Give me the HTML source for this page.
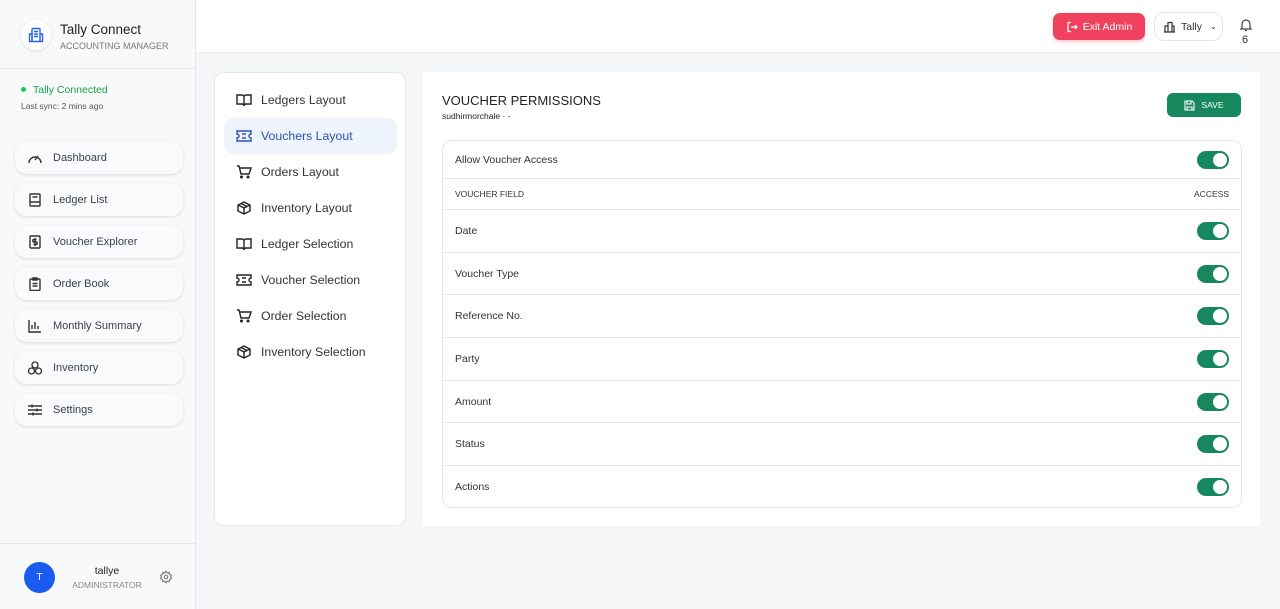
<!DOCTYPE html>
<html><head><meta charset="utf-8"><style>
*{box-sizing:border-box;margin:0;padding:0}
body{width:1280px;height:609px;overflow:hidden;font-family:"Liberation Sans",sans-serif;background:#f5f6f8;position:relative;color:#333}
.sb{position:absolute;left:0;top:0;width:196px;height:609px;background:#f8f9fb;border-right:1px solid #e5e7eb}
.abs{position:absolute}
.nav{position:absolute;left:15px;width:168px;height:33px;border-radius:12px;background:#f9fafb;box-shadow:0 1px 3px rgba(0,0,0,.12);font-size:11px;color:#374151;display:flex;align-items:center;padding-left:12px}
.nav svg{margin-right:10px}
.hdr{position:absolute;left:196px;top:0;right:0;height:53px;background:#fff;border-bottom:1px solid #eceef1}
.lc{position:absolute;left:214px;top:72px;width:192px;height:454px;background:#fff;border:1px solid #e5e7eb;border-radius:10px}
.li{position:absolute;left:9px;width:173px;height:36px;border-radius:10px;display:flex;align-items:center;padding-left:12px;font-size:12.3px;color:#333}
.li svg{margin-right:9px}
.rc{position:absolute;left:423px;top:72px;width:837px;height:454px;background:#fff}
.tb{position:absolute;left:19px;top:68px;width:800px;height:368px;border:1px solid #e5e7eb;border-radius:10px}
.row{position:absolute;left:0;right:0;border-top:1px solid #e5e7eb;font-size:10.5px;color:#333;padding-left:12px;display:flex;align-items:center}
.tg{position:absolute;right:12px;width:32px;height:18px;border-radius:9px;background:#17875d}
.tg:after{content:"";position:absolute;right:2px;top:2px;width:14px;height:14px;border-radius:50%;background:#fff}
</style></head><body>
<div class="sb">
 <div class="abs" style="left:0;top:68px;width:195px;border-top:1px solid #e5e7eb"></div>
 <div class="abs" style="left:21px;top:20px;width:30px;height:30px;border-radius:50%;background:#fff;box-shadow:0 1px 3px rgba(0,0,0,.1)"></div>
 <svg class="abs" style="left:28px;top:27px" width="16" height="16" viewBox="0 0 16 16" fill="none" stroke="#2563eb" stroke-width="1.4"><rect x="4" y="1.5" width="8" height="13" rx="1"/><path d="M1.5 7h2.5v7.5h-2.5zM12 7h2.5v7.5H12M6 4.5h4M6 7h4M6 9.5h4"/></svg>
 <div class="abs" style="left:60px;top:22px;font-size:13.5px;color:#222">Tally Connect</div>
 <div class="abs" style="left:60px;top:41px;font-size:9px;color:#777">ACCOUNTING MANAGER</div>
 <div class="abs" style="left:21px;top:87px;width:5px;height:5px;border-radius:50%;background:#22c55e"></div>
 <div class="abs" style="left:33px;top:84px;font-size:10.5px;color:#16a34a">Tally Connected</div>
 <div class="abs" style="left:21px;top:101px;font-size:8.5px;color:#555">Last sync: 2 mins ago</div>
 <div class="nav" style="top:141px"><svg width="16" height="14" viewBox="0 0 16 14" fill="none" stroke="#333" stroke-width="1.4"><path d="M2 12a6 6 0 0 1 12 0M8 9l3-4"/></svg>Dashboard</div>
 <div class="nav" style="top:183px"><svg width="16" height="14" viewBox="0 0 16 14" fill="none" stroke="#333" stroke-width="1.4"><rect x="3" y="1" width="10" height="12" rx="1"/><path d="M5.5 4h5M3 9h10"/></svg>Ledger List</div>
 <div class="nav" style="top:225px"><svg width="16" height="14" viewBox="0 0 16 14" fill="none" stroke="#333" stroke-width="1.4"><rect x="3" y="1" width="10" height="12" rx="1"/><path d="M9.5 4.5h-2.5a1 1 0 0 0 0 2.5h2a1 1 0 0 1 0 2.5h-2.5M8 3v8"/></svg>Voucher Explorer</div>
 <div class="nav" style="top:267px"><svg width="16" height="14" viewBox="0 0 16 14" fill="none" stroke="#333" stroke-width="1.4"><rect x="3" y="2" width="10" height="11.5" rx="1"/><path d="M6 1h4v2H6zM5.5 6.5h5M5.5 9h5"/></svg>Order Book</div>
 <div class="nav" style="top:309px"><svg width="16" height="14" viewBox="0 0 16 14" fill="none" stroke="#333" stroke-width="1.4"><path d="M2 1v12h12M5 10V6M8 10V3M11 10V7"/></svg>Monthly Summary</div>
 <div class="nav" style="top:351px"><svg width="16" height="14" viewBox="0 0 16 14" fill="none" stroke="#333" stroke-width="1.3"><circle cx="8" cy="4" r="3"/><circle cx="4.5" cy="10" r="3"/><circle cx="11.5" cy="10" r="3"/></svg>Inventory</div>
 <div class="nav" style="top:393px"><svg width="16" height="14" viewBox="0 0 16 14" fill="none" stroke="#333" stroke-width="1.4"><path d="M1 3h14M1 7h14M1 11h14"/><path d="M5 1.5v3M10 5.5v3M6 9.5v3"/></svg>Settings</div>
 <div class="abs" style="left:0;top:543px;width:195px;border-top:1px solid #e5e7eb"></div>
 <div class="abs" style="left:24px;top:562px;width:31px;height:31px;border-radius:50%;background:#1a5cf0;color:#fff;font-size:10px;display:flex;align-items:center;justify-content:center">T</div>
 <div class="abs" style="left:72px;top:565px;width:70px;text-align:center;font-size:10.5px;color:#222">tallye</div>
 <div class="abs" style="left:72px;top:580px;width:70px;text-align:center;font-size:8.5px;color:#888">ADMINISTRATOR</div>
 <svg class="abs" style="left:159px;top:570px" width="14" height="14" viewBox="0 0 24 24" fill="none" stroke="#777" stroke-width="1.8"><circle cx="12" cy="12" r="3"/><path d="M12 2l2 3 3.5-1 .5 3.5 3.5 1.5-1.5 3 1.5 3-3.5 1.5-.5 3.5-3.5-1-2 3-2-3-3.5 1-.5-3.5L2.5 15 4 12 2.5 9 6 7.5 6.5 4 10 5z"/></svg>
</div>
<div class="hdr">
 <div class="abs" style="left:857px;top:13px;width:92px;height:27px;border-radius:7px;background:#f0415e;color:#fff;font-size:10.5px;display:flex;align-items:center;justify-content:center;box-shadow:0 2px 4px rgba(240,65,94,.3)"><svg width="12" height="12" viewBox="0 0 12 12" fill="none" stroke="#fff" stroke-width="1.2" style="margin-right:5px"><path d="M5 1.5H2v9h3M5 6h6M9 4l2 2-2 2"/></svg>Exit Admin</div>
 <div class="abs" style="left:958px;top:12px;width:69px;height:29px;border-radius:10px;border:1px solid #e5e7eb;font-size:10.5px;color:#333;display:flex;align-items:center;padding-left:8px"><svg width="13" height="12" viewBox="0 0 13 12" fill="none" stroke="#333" stroke-width="1.2" style="margin-right:5px"><path d="M1 11h11M2 11V5h3M5 11V1.5h4V11M9 5h2v6"/></svg>Tally<span style="margin-left:8px;font-size:8px">&#8964;</span></div>
 <svg class="abs" style="left:1043px;top:18px" width="14" height="14" viewBox="0 0 14 14" fill="none" stroke="#444" stroke-width="1.2"><path d="M3 10V6a4 4 0 0 1 8 0v4l1 1H2zM6 12.5h2"/></svg>
 <div class="abs" style="left:1046px;top:34px;font-size:11px;color:#333">6</div>
</div>
<div class="lc">
 <div class="li" style="top:9px"><svg width="16" height="14" viewBox="0 0 16 14" fill="none" stroke="#222" stroke-width="1.4"><path d="M1 2h5a2 2 0 0 1 2 2v9a2 2 0 0 0-2-2H1zM15 2h-5a2 2 0 0 0-2 2v9a2 2 0 0 1 2-2h5z"/></svg>Ledgers Layout</div>
 <div class="li" style="top:45px;background:#eef4fe;color:#2f4fb0"><svg width="16" height="14" viewBox="0 0 16 14" fill="none" stroke="#2f4fb0" stroke-width="1.4"><path d="M1 2h14v3a2 2 0 0 0 0 4v3H1V9a2 2 0 0 0 0-4zM6 5h4M6 9h4"/></svg>Vouchers Layout</div>
 <div class="li" style="top:81px"><svg width="16" height="14" viewBox="0 0 16 14" fill="none" stroke="#222" stroke-width="1.4"><path d="M1 1h2l2 8h8l2-6H4"/><circle cx="5.5" cy="12" r=".8"/><circle cx="12" cy="12" r=".8"/></svg>Orders Layout</div>
 <div class="li" style="top:117px"><svg width="16" height="14" viewBox="0 0 16 14" fill="none" stroke="#222" stroke-width="1.4"><path d="M8 1l6 3v6l-6 3-6-3V4zM2 4l6 3 6-3M8 7v6M5 2.5l6 3"/></svg>Inventory Layout</div>
 <div class="li" style="top:153px"><svg width="16" height="14" viewBox="0 0 16 14" fill="none" stroke="#222" stroke-width="1.4"><path d="M1 2h5a2 2 0 0 1 2 2v9a2 2 0 0 0-2-2H1zM15 2h-5a2 2 0 0 0-2 2v9a2 2 0 0 1 2-2h5z"/></svg>Ledger Selection</div>
 <div class="li" style="top:189px"><svg width="16" height="14" viewBox="0 0 16 14" fill="none" stroke="#222" stroke-width="1.4"><path d="M1 2h14v3a2 2 0 0 0 0 4v3H1V9a2 2 0 0 0 0-4zM6 5h4M6 9h4"/></svg>Voucher Selection</div>
 <div class="li" style="top:225px"><svg width="16" height="14" viewBox="0 0 16 14" fill="none" stroke="#222" stroke-width="1.4"><path d="M1 1h2l2 8h8l2-6H4"/><circle cx="5.5" cy="12" r=".8"/><circle cx="12" cy="12" r=".8"/></svg>Order Selection</div>
 <div class="li" style="top:261px"><svg width="16" height="14" viewBox="0 0 16 14" fill="none" stroke="#222" stroke-width="1.4"><path d="M8 1l6 3v6l-6 3-6-3V4zM2 4l6 3 6-3M8 7v6M5 2.5l6 3"/></svg>Inventory Selection</div>
</div>
<div class="rc">
 <div class="abs" style="left:19px;top:21px;font-size:13px;color:#222">VOUCHER PERMISSIONS</div>
 <div class="abs" style="left:19px;top:39px;font-size:8.5px;color:#222">sudhirmorchale · -</div>
 <div class="abs" style="left:744px;top:21px;width:74px;height:24px;border-radius:6px;background:#17875d;color:#fff;font-size:8.5px;display:flex;align-items:center;justify-content:center"><svg width="11" height="11" viewBox="0 0 11 11" fill="none" stroke="#fff" stroke-width="1.1" style="margin-right:6px"><path d="M1 1h7l2 2v7H1zM3 1v3h4V1M3 10V7h5v3"/></svg>SAVE</div>
 <div class="tb">
  <div class="row" style="top:0;height:37px;border-top:none">Allow Voucher Access<div class="tg"></div></div>
  <div class="row" style="top:37px;height:31px;font-size:8.5px">VOUCHER FIELD<span style="position:absolute;right:12px">ACCESS</span></div>
  <div class="row" style="top:68px;height:43px">Date<div class="tg"></div></div>
  <div class="row" style="top:111px;height:42px">Voucher Type<div class="tg"></div></div>
  <div class="row" style="top:153px;height:43px">Reference No.<div class="tg"></div></div>
  <div class="row" style="top:196px;height:43px">Party<div class="tg"></div></div>
  <div class="row" style="top:239px;height:42px">Amount<div class="tg"></div></div>
  <div class="row" style="top:281px;height:43px">Status<div class="tg"></div></div>
  <div class="row" style="top:324px;height:42px">Actions<div class="tg"></div></div>
 </div>
</div>
</body></html>
